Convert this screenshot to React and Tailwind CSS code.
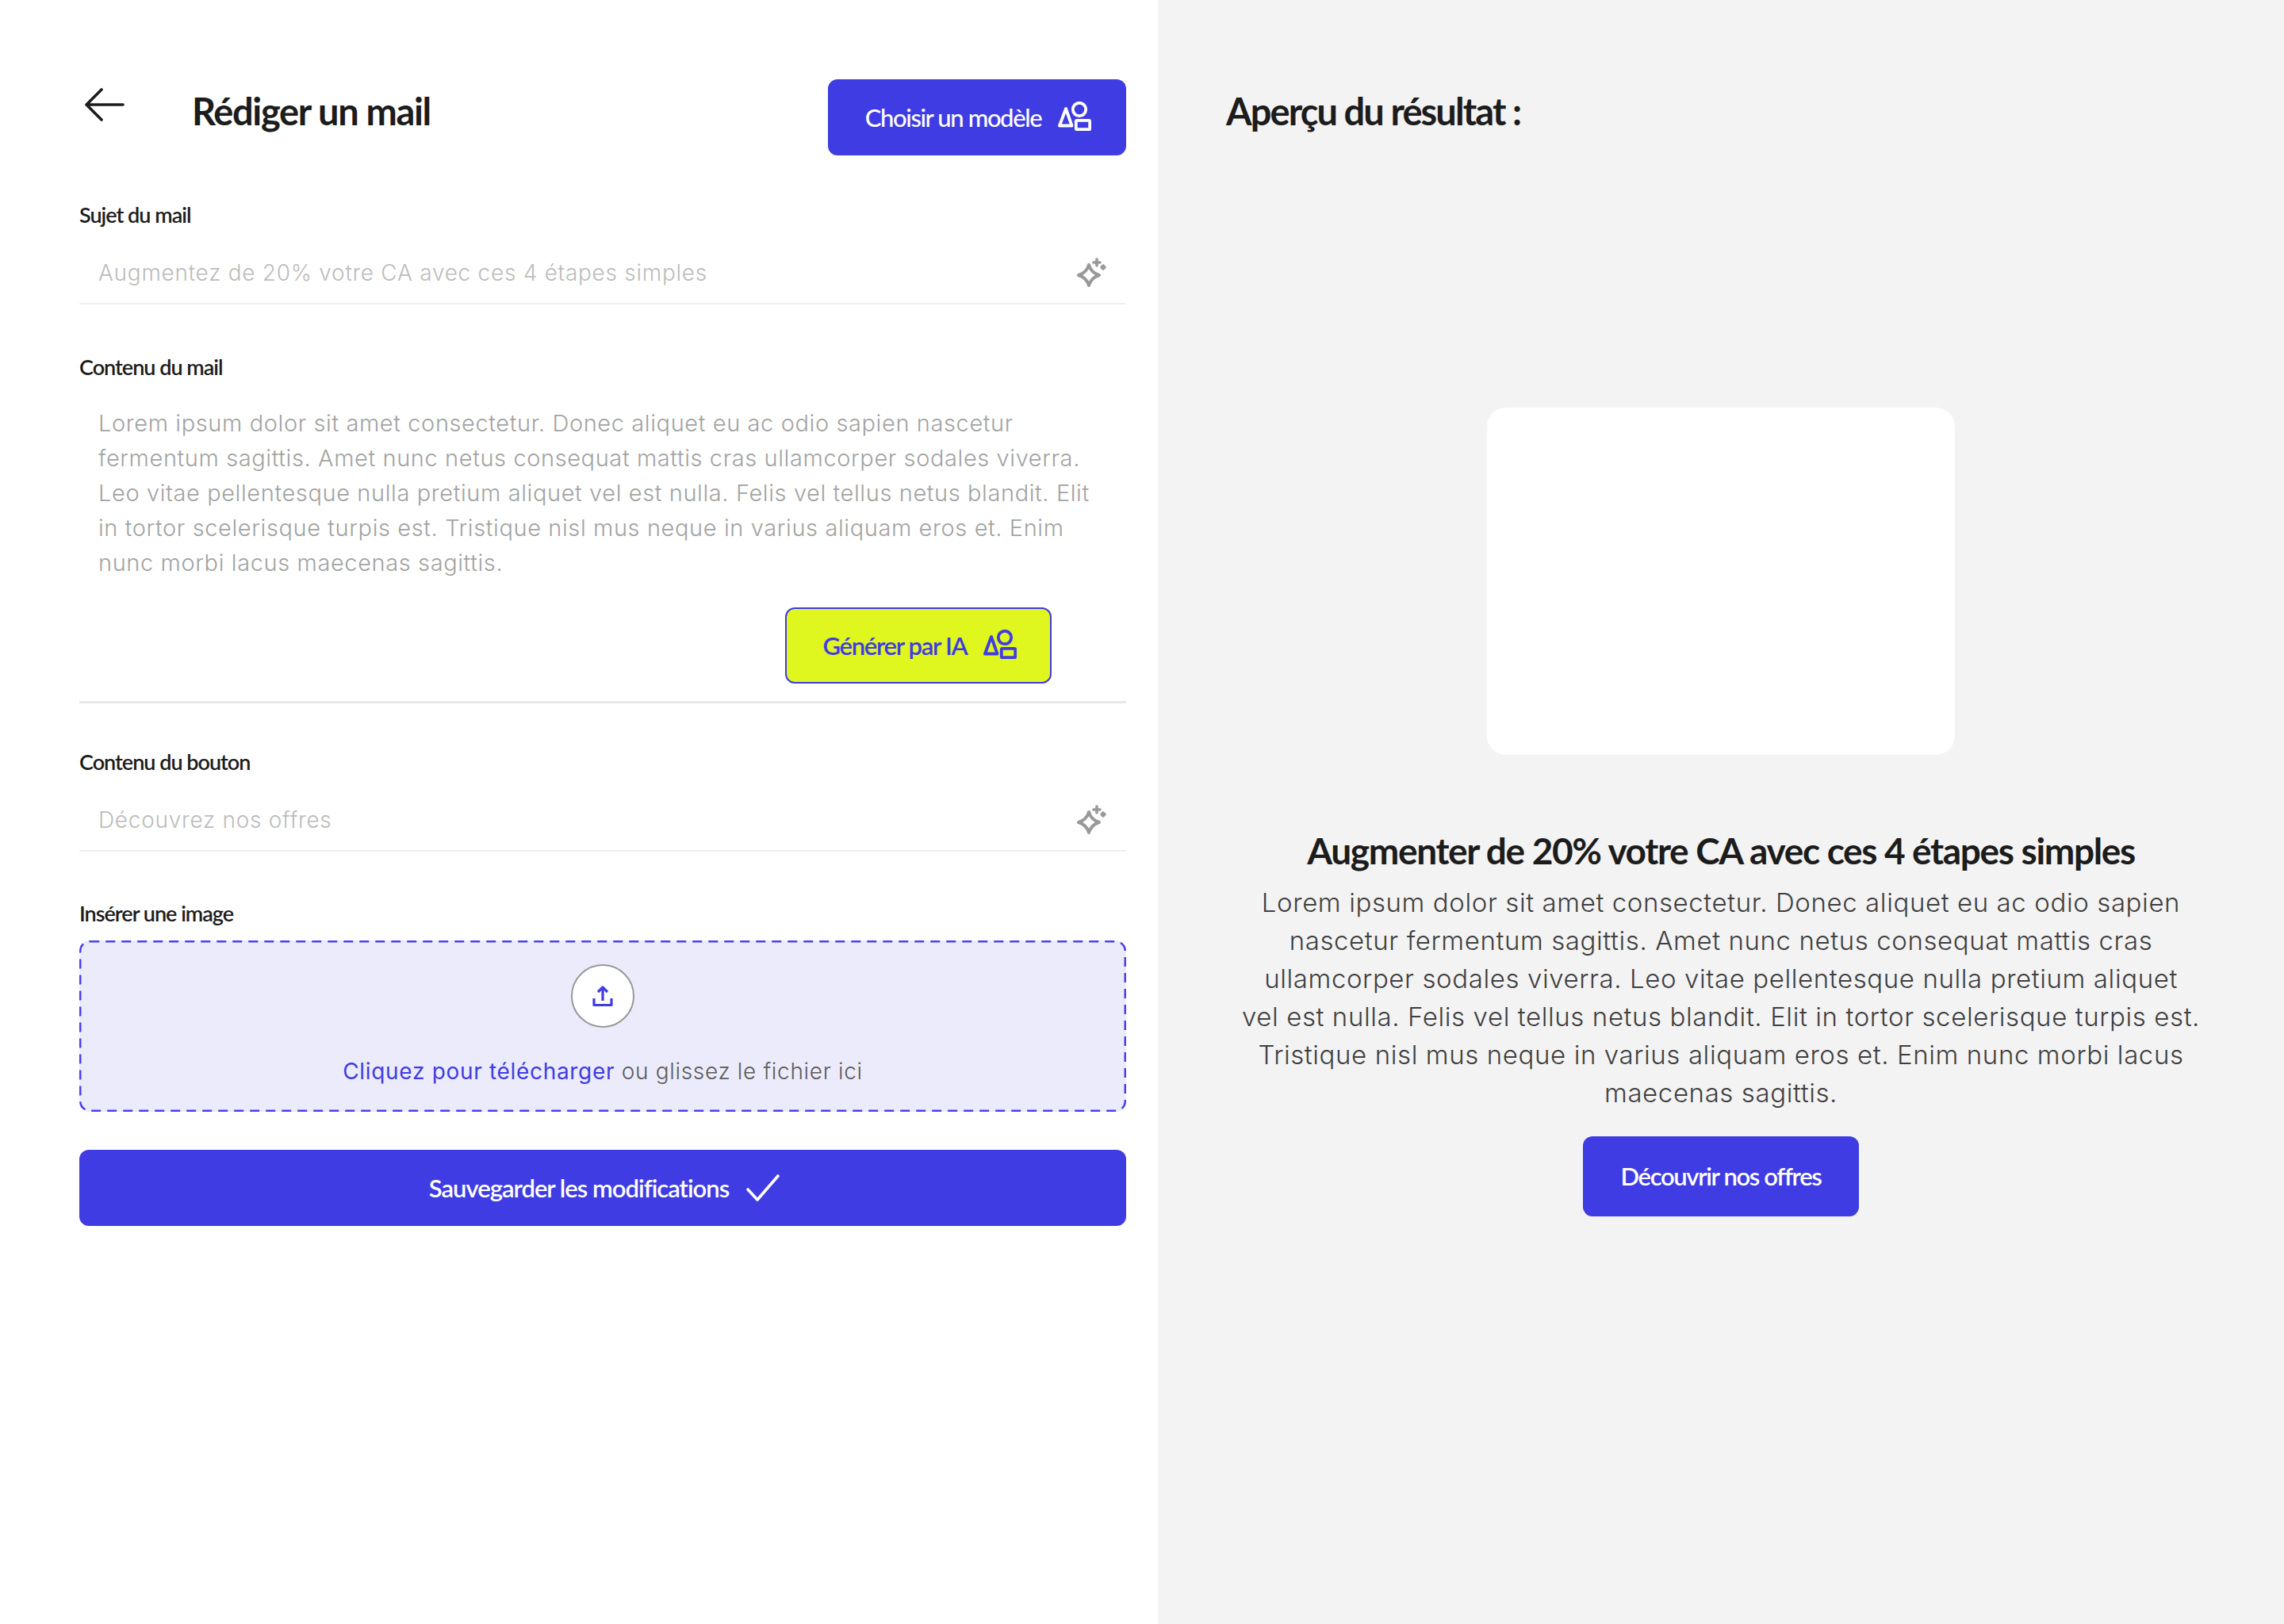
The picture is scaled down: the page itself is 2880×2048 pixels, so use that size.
const ShapesIcon = ({ className }) => (
  <svg viewBox="0 0 42 37" className={className} fill="none" stroke="currentColor" strokeLinejoin="round">
    <path d="M10 9 L2 30.5 H17.5 Z" strokeWidth="3.8" />
    <circle cx="27" cy="10" r="8.2" strokeWidth="3.8" />
    <rect x="22.8" y="23.8" width="17.4" height="11.4" rx="1" strokeWidth="3.8" />
  </svg>
)

const SparkIcon = () => (
  <svg viewBox="0 0 38 38" className="w-[38px] h-[38px] text-[#999999]" fill="none" stroke="currentColor" strokeLinejoin="round" strokeLinecap="round">
    <path d="M15 9 Q18 19 28 22 Q18 25 15 35 Q12 25 2 22 Q12 19 15 9 Z" strokeWidth="4" />
    <path d="M25 2 V10 M21 6 H29" strokeWidth="3.6" />
    <path d="M33 9.5 L35.5 12 L33 14.5 L30.5 12 Z" strokeWidth="2.6" fill="currentColor" />
  </svg>
)

const Label = ({ children }) => (
  <div className="h-[34px] flex items-center text-[27px] leading-[34px] font-semibold text-[#1c1c1c] tracking-[-1px] font-['Lato',sans-serif]">
    {children}
  </div>
)

const InputRow = ({ placeholder }) => (
  <div className="mt-[18px] h-[78px] border-b-2 border-[#eeeeee] flex items-center justify-between pl-[24px] pr-[24px]">
    <span className="text-[28px] font-light text-[#bcbcbc] tracking-[0.73px]">{placeholder}</span>
    <SparkIcon />
  </div>
)

export default function App() {
  return (
    <div className="flex w-full h-[2048px] bg-white font-['Inter',sans-serif]">
      <div className="w-[1460px] pl-[100px] pr-[40px] pt-[100px]">
        <div className="flex items-start justify-between h-[96px]">
          <div className="flex items-start">
            <svg viewBox="0 0 50 42" className="w-[50px] h-[42px] mt-[11px] ml-[7px] text-[#1c1c1c]" fill="none" stroke="currentColor" strokeWidth="3.6" strokeLinecap="round" strokeLinejoin="round">
              <path d="M48 21 H2 M21 2 L2 21 L21 40" />
            </svg>
            <h1 className="ml-[85px] mt-[12px] text-[47px] leading-[56px] font-bold text-[#1c1c1c] tracking-[-1.35px] font-['Lato',sans-serif]">Rédiger un mail</h1>
          </div>
          <button className="w-[376px] h-[96px] pl-[3px] rounded-[12px] bg-[#3f3ce3] text-white flex items-center justify-center gap-[21px] text-[31px] font-medium tracking-[-1.4px] font-['Lato',sans-serif]">
            Choisir un modèle
            <ShapesIcon className="w-[42px] h-[37px] -mt-[3px]" />
          </button>
        </div>

        <div className="mt-[58px]"><Label>Sujet du mail</Label></div>
        <InputRow placeholder="Augmentez de 20% votre CA avec ces 4 étapes simples" />

        <div className="mt-[62px]"><Label>Contenu du mail</Label></div>
        <div className="mt-[32px] border-b-[3px] border-[#e8e8e8] pb-[22px]">
          <p className="px-[24px] text-[29px] leading-[44px] font-light text-[#a3a3a3] tracking-[0.6px] whitespace-nowrap">
            Lorem ipsum dolor sit amet consectetur. Donec aliquet eu ac odio sapien nascetur<br />
            fermentum sagittis. Amet nunc netus consequat mattis cras ullamcorper sodales viverra.<br />
            Leo vitae pellentesque nulla pretium aliquet vel est nulla. Felis vel tellus netus blandit. Elit<br />
            in tortor scelerisque turpis est. Tristique nisl mus neque in varius aliquam eros et. Enim<br />
            nunc morbi lacus maecenas sagittis.
          </p>
          <div className="mt-[34px] flex justify-end pr-[94px]">
            <button className="w-[336px] h-[96px] pl-[3px] rounded-[12px] border-2 border-[#3f3ce3] bg-[#dff61f] text-[#3f3ce3] flex items-center justify-center gap-[20px] text-[31px] font-semibold tracking-[-1.3px] font-['Lato',sans-serif]">
              Générer par IA
              <ShapesIcon className="w-[42px] h-[37px] -mt-[3px]" />
            </button>
          </div>
        </div>

        <div className="mt-[57px]"><Label>Contenu du bouton</Label></div>
        <InputRow placeholder="Découvrez nos offres" />

        <div className="mt-[61px]"><Label>Insérer une image</Label></div>
        <div className="relative mt-[17px] h-[216px] rounded-[12px] bg-[#ecebfb] flex flex-col items-center pt-[30px]">
          <svg className="absolute inset-0 w-full h-full" fill="none">
            <rect x="1.25" y="1.25" width="1317.5" height="213.5" rx="12" stroke="#4b3ff0" strokeWidth="2.5" strokeDasharray="12 8" />
          </svg>
          <div className="w-[80px] h-[80px] rounded-full bg-white border-2 border-[#999999] flex items-center justify-center">
            <svg viewBox="0 0 28 28" className="w-[28px] h-[28px] text-[#3f3ce3]" fill="none" stroke="currentColor" strokeWidth="3.2" strokeLinejoin="round">
              <path d="M14 20 V3 M8 9 L14 3 L20 9" />
              <path d="M3 17 V25.5 H25 V17" />
            </svg>
          </div>
          <div className="mt-[33px] text-[28px] leading-[44px] font-light tracking-[0.68px] text-[#5c5c5c]">
            <span className="text-[#3f3ce3] font-normal">Cliquez pour télécharger</span> ou glissez le fichier ici
          </div>
        </div>

        <button className="mt-[48px] w-full h-[96px] pl-[4px] rounded-[12px] bg-[#3f3ce3] text-white flex items-center justify-center gap-[22px] text-[31px] font-semibold tracking-[-1px] font-['Lato',sans-serif]">
          Sauvegarder les modifications
          <svg viewBox="0 0 42 34" className="w-[42px] h-[34px]" fill="none" stroke="currentColor" strokeWidth="3.6" strokeLinecap="round" strokeLinejoin="round">
            <path d="M2 19 L14 32 L40 2" />
          </svg>
        </button>
      </div>

      <div className="flex-1 bg-[#f3f3f3] px-[86px] pt-[112px]">
        <h2 className="text-[47px] leading-[56px] font-bold text-[#1c1c1c] tracking-[-1.9px] font-['Lato',sans-serif]">Aperçu du résultat :</h2>
        <div className="flex flex-col items-center">
          <div className="mt-[346px] w-[590px] h-[438px] rounded-[24px] bg-white" />
          <h3 className="mt-[93px] text-[46px] leading-[56px] font-bold text-[#1c1c1c] tracking-[-1.35px] whitespace-nowrap font-['Lato',sans-serif]">Augmenter de 20% votre CA avec ces 4 étapes simples</h3>
          <p className="mt-[13px] text-center text-[33px] leading-[48px] font-light text-[#3f3f3f] tracking-[0.6px] whitespace-nowrap">
            Lorem ipsum dolor sit amet consectetur. Donec aliquet eu ac odio sapien<br />
            nascetur fermentum sagittis. Amet nunc netus consequat mattis cras<br />
            ullamcorper sodales viverra. Leo vitae pellentesque nulla pretium aliquet<br />
            vel est nulla. Felis vel tellus netus blandit. Elit in tortor scelerisque turpis est.<br />
            Tristique nisl mus neque in varius aliquam eros et. Enim nunc morbi lacus<br />
            maecenas sagittis.
          </p>
          <button className="mt-[31px] w-[348px] h-[101px] rounded-[12px] bg-[#3f3ce3] text-white text-[31px] font-semibold tracking-[-1.35px] font-['Lato',sans-serif]">
            Découvrir nos offres
          </button>
        </div>
      </div>
    </div>
  )
}
